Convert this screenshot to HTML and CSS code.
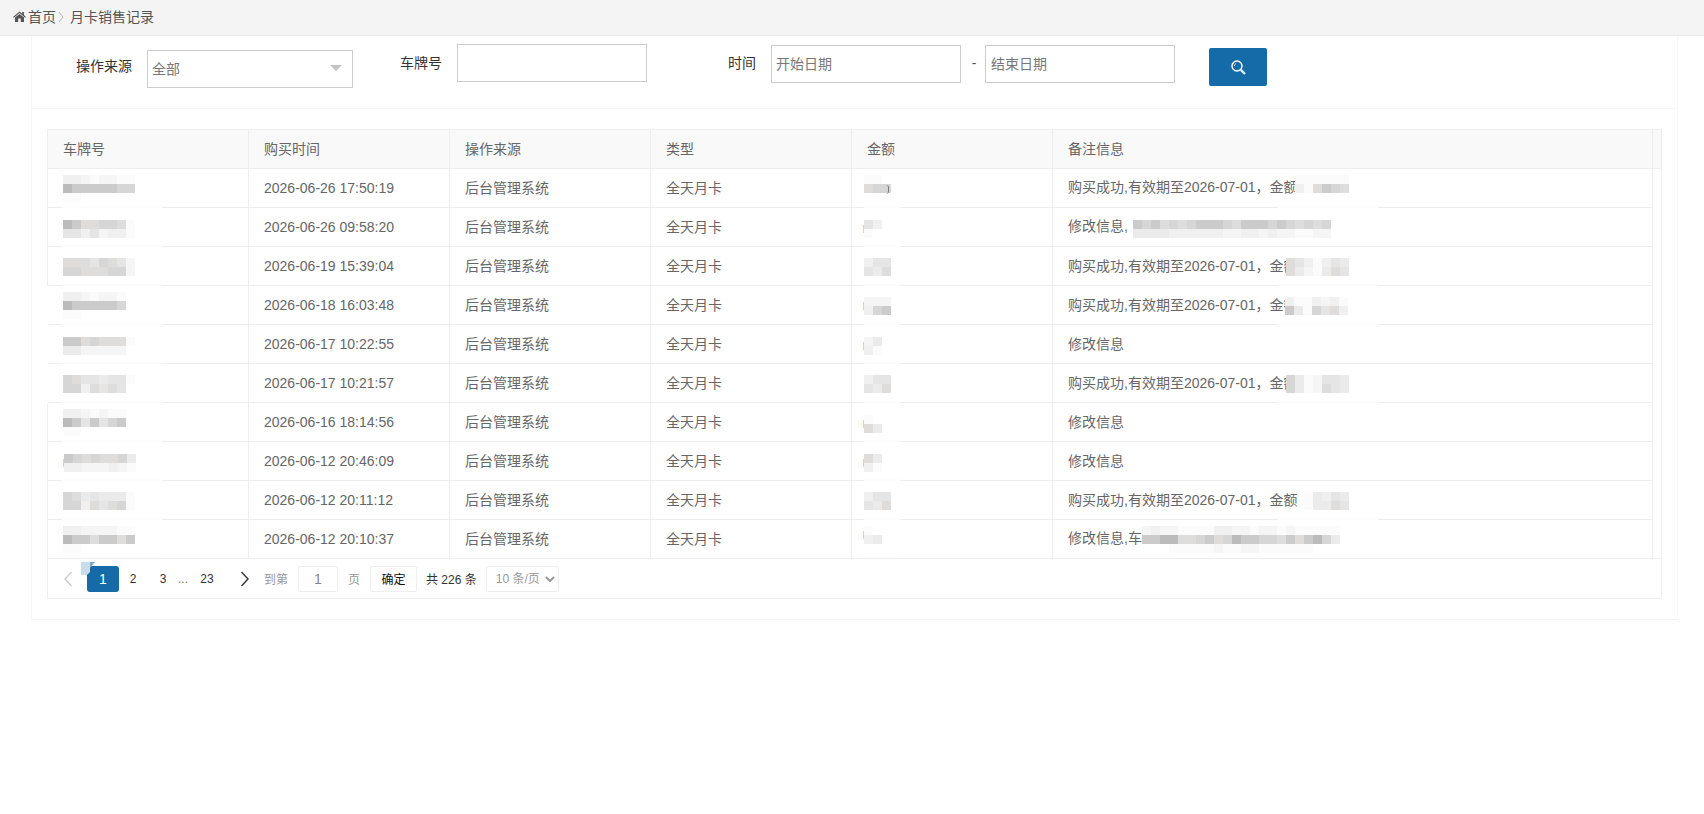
FILE: index.html
```html
<!DOCTYPE html>
<html lang="zh-CN">

<head>
    <meta charset="UTF-8">
    <meta name="viewport" content="width=device-width, initial-scale=1.0">
    <title>月卡销售记录</title>
    <link rel="stylesheet" href="styles.css">
</head>

<body>
    <div class="crumbs">
        <svg class="home-icon" viewBox="0 0 13 11" width="13" height="11">
            <path d="M6.5 0.4 L9.2 2.7 V1 H10.9 V4.1 L13 5.9 L12.2 6.8 L6.5 2 L0.8 6.8 L0 5.9 Z" fill="#555" />
            <path d="M2 6.6 L6.5 2.9 L11 6.6 V11 H7.8 V7.6 H5.2 V11 H2 Z" fill="#555" />
        </svg>
        <a class="crumb-link">首页</a>
        <svg class="crumb-sep" viewBox="0 0 6 12" width="6" height="12">
            <path d="M1 1 L5 6 L1 11" fill="none" stroke="#bbb" stroke-width="1" />
        </svg>
        <span>月卡销售记录</span>
    </div>

    <div class="card">
        <div class="filter">
            <label class="filter-label label-source">操作来源</label>
            <div class="fake-select"><span>全部</span><i class="caret"></i></div>
            <label class="filter-label label-plate">车牌号</label>
            <input type="text" class="field field-plate">
            <label class="filter-label label-time">时间</label>
            <input type="text" class="field field-date" placeholder="开始日期">
            <span class="dash">-</span>
            <input type="text" class="field field-date field-end" placeholder="结束日期">
            <button class="search-btn">
                <svg viewBox="0 0 16 16" width="16" height="16">
                    <circle cx="7" cy="7" r="5" fill="none" stroke="#fff" stroke-width="1.4" />
                    <path d="M4.4 7 A2.7 2.7 0 0 1 6 4.5" fill="none" stroke="#cfe3f2" stroke-width="1" />
                    <path d="M10.6 10.6 L15 15" stroke="#dcebf6" stroke-width="2.4" />
                </svg>
            </button>
        </div>

        <div class="table-box">
            <i class="edge-wipe"></i>
            <table class="sales">
                <thead>
                    <tr>
                        <th>车牌号</th>
                        <th>购买时间</th>
                        <th>操作来源</th>
                        <th>类型</th>
                        <th>金额</th>
                        <th>备注信息</th>
                        <th class="gutter"></th>
                    </tr>
                </thead>
                <tbody>
                    <tr>
                        <td class="blur-name"><span class="mosaic" data-shades="33212211/98888877/11000000"></span></td>
                        <td>2026-06-26 17:50:19</td>
                        <td>后台管理系统</td>
                        <td>全天月卡</td>
                        <td class="blur-amount"><span class="mosaic" data-shift="-3" data-shades="110/677/000"></span><i class="tail"></i></td>
                        <td class="blur-note">购买成功,有效期至2026-07-01，金额<span class="mosaic" data-shift="-3" data-shades="111111/316876/000000"></span></td>
                        <td class="gutter"></td>
                    </tr>
                    <tr>
                        <td class="blur-name"><span class="mosaic drop" data-shades="98667761/55352331"></span></td>
                        <td>2026-06-26 09:58:20</td>
                        <td>后台管理系统</td>
                        <td>全天月卡</td>
                        <td class="blur-amount"><span class="mosaic drop mark" data-shift="-3" data-shades="53/10"></span></td>
                        <td>修改信息,<span class="mosaic drop" data-shift="5" data-shades="8786767888768887876767/4444333333223323221122"></span></td>
                        <td class="gutter"></td>
                    </tr>
                    <tr>
                        <td class="blur-name"><span class="mosaic" data-shades="66657652/77666772"></span></td>
                        <td>2026-06-19 15:39:04</td>
                        <td>后台管理系统</td>
                        <td>全天月卡</td>
                        <td class="blur-amount"><span class="mosaic" data-shift="-3" data-shades="355/546"></span></td>
                        <td class="blur-note">购买成功,有效期至2026-07-01，金额<span class="mosaic" data-shift="-12" data-shades="6531354/6421465"></span></td>
                        <td class="gutter"></td>
                    </tr>
                    <tr>
                        <td class="blur-name"><span class="mosaic" data-shades="33212210/98888870/11000000"></span></td>
                        <td>2026-06-18 16:03:48</td>
                        <td>后台管理系统</td>
                        <td>全天月卡</td>
                        <td class="blur-amount"><span class="mosaic mark" data-shift="-3" data-shades="222/378"></span></td>
                        <td class="blur-note">购买成功,有效期至2026-07-01，金额<span class="mosaic" data-shift="-13" data-shades="3113231/8417563"></span></td>
                        <td class="gutter"></td>
                    </tr>
                    <tr>
                        <td class="blur-name"><span class="mosaic drop" data-shades="88676661/44222220"></span></td>
                        <td>2026-06-17 10:22:55</td>
                        <td>后台管理系统</td>
                        <td>全天月卡</td>
                        <td class="blur-amount"><span class="mosaic drop mark" data-shift="-3" data-shades="24/31"></span></td>
                        <td>修改信息</td>
                        <td class="gutter"></td>
                    </tr>
                    <tr>
                        <td class="blur-name"><span class="mosaic" data-shades="76554551/77365650"></span></td>
                        <td>2026-06-17 10:21:57</td>
                        <td>后台管理系统</td>
                        <td>全天月卡</td>
                        <td class="blur-amount"><span class="mosaic" data-shift="-3" data-shades="355/546"></span></td>
                        <td class="blur-note">购买成功,有效期至2026-07-01，金额<span class="mosaic" data-shift="-12" data-shades="7412554/7412654"></span></td>
                        <td class="gutter"></td>
                    </tr>
                    <tr>
                        <td class="blur-name"><span class="mosaic" data-shades="33212110/98585780/11000000"></span></td>
                        <td>2026-06-16 18:14:56</td>
                        <td>后台管理系统</td>
                        <td>全天月卡</td>
                        <td class="blur-amount"><span class="mosaic drop mark" data-shift="-3" data-shades="10/64"></span></td>
                        <td>修改信息</td>
                        <td class="gutter"></td>
                    </tr>
                    <tr>
                        <td class="blur-name"><span class="mosaic drop mark" data-shift="1" data-shades="87676674/33222321"></span></td>
                        <td>2026-06-12 20:46:09</td>
                        <td>后台管理系统</td>
                        <td>全天月卡</td>
                        <td class="blur-amount"><span class="mosaic drop mark" data-shift="-3" data-shades="64/31"></span></td>
                        <td>修改信息</td>
                        <td class="gutter"></td>
                    </tr>
                    <tr>
                        <td class="blur-name"><span class="mosaic" data-shades="76454441/77365671"></span></td>
                        <td>2026-06-12 20:11:12</td>
                        <td>后台管理系统</td>
                        <td>全天月卡</td>
                        <td class="blur-amount"><span class="mosaic" data-shift="-3" data-shades="355/546"></span></td>
                        <td class="blur-note">购买成功,有效期至2026-07-01，金额<span class="mosaic" data-shift="6" data-shades="14354/14465"></span></td>
                        <td class="gutter"></td>
                    </tr>
                    <tr>
                        <td class="blur-name"><span class="mosaic" data-shades="33222211/98868868/11000000"></span></td>
                        <td>2026-06-12 20:10:37</td>
                        <td>后台管理系统</td>
                        <td>全天月卡</td>
                        <td class="blur-amount"><span class="mosaic mark" data-shift="-3" data-shades="10/34/00"></span></td>
                        <td>修改信息,车<span class="mosaic" data-shades="2322111133221221211111/8899667867988776868974/0001111121122111111000"></span></td>
                        <td class="gutter"></td>
                    </tr>
                </tbody>
            </table>

            <div class="pager">
                <svg class="pager-glitch" viewBox="0 0 14 13" width="14" height="13">
                    <path d="M0 0 H9 V10 L6 13 H0 Z" fill="#c9dcec" />
                    <path d="M9 0 H14 L9 6 Z" fill="#7fa9d0" />
                </svg>
                <svg class="pager-arrow" viewBox="0 0 10 16" width="10" height="16">
                    <path d="M8.5 1 L2 8 L8.5 15" fill="none" stroke="#ccc" stroke-width="1.4" />
                </svg>
                <a class="page page-on">1</a>
                <a class="page page-first">2</a>
                <a class="page">3</a>
                <span class="page-more">...</span>
                <a class="page page-last">23</a>
                <svg class="pager-arrow next" viewBox="0 0 10 16" width="10" height="16">
                    <path d="M1.5 1 L8 8 L1.5 15" fill="none" stroke="#333" stroke-width="1.4" />
                </svg>
                <span class="go-text">到第</span>
                <input type="text" class="page-input" value="1">
                <span class="go-text">页</span>
                <button class="page-ok">确定</button>
                <span class="total">共 226 条</span>
                <select class="page-size">
                    <option>10 条/页</option>
                </select>
            </div>
        </div>
    </div>
    <script src="script.js"></script>
</body>

</html>
```

FILE: styles.css
```css
* {
    box-sizing: border-box;
}

body {
    margin: 0;
    background: #fff;
    color: #666;
    font-family: "Liberation Sans", "Noto Sans CJK SC", sans-serif;
    font-size: 14px;
}

.crumbs {
    display: flex;
    align-items: center;
    height: 36px;
    padding: 0 0 3px 13px;
    background: #f4f4f4;
    border-bottom: 1px solid #e8e8e8;
    color: #555;
}

.home-icon {
    margin-right: 2px;
}

.crumb-sep {
    margin: 2px 6px 0 2px;
}

.card {
    margin-left: 31px;
    width: 1647px;
    padding-bottom: 20px;
    border-left: 1px solid #f6f6f6;
    border-right: 1px solid #f8f8f8;
    border-bottom: 1px solid #f3f3f3;
}

/* filter row */
.filter {
    display: flex;
    align-items: flex-start;
    height: 73px;
    border-bottom: 1px solid #f5f5f5;
    color: #333;
}

.filter-label {
    line-height: 20px;
}

.label-source {
    margin: 20px 15px 0 44px;
}

.label-plate {
    margin: 17px 15px 0 47px;
}

.label-time {
    margin: 17px 15px 0 81px;
}

.fake-select {
    display: flex;
    align-items: center;
    justify-content: space-between;
    width: 206px;
    height: 38px;
    margin-top: 14px;
    padding: 0 10px 2px 4px;
    border: 1px solid #ccc;
    color: #777;
}

.caret {
    border-left: 6px solid transparent;
    border-right: 6px solid transparent;
    border-top: 6px solid #c4c4c4;
}

.field {
    height: 38px;
    padding: 0 4px;
    border: 1px solid #ccc;
    outline: none;
    font: inherit;
    background: #fff;
}

.field::placeholder {
    color: #777;
}

.field-plate {
    width: 190px;
    margin-top: 8px;
}

.field-date {
    width: 190px;
    margin-top: 9px;
}

.field-end {
    padding-left: 5px;
}

.dash {
    width: 24px;
    margin-top: 19px;
    padding-left: 2px;
    text-align: center;
    color: #555;
}

.search-btn {
    display: flex;
    align-items: center;
    justify-content: center;
    width: 58px;
    height: 38px;
    margin: 12px 0 0 34px;
    padding: 0;
    border: none;
    border-radius: 2px;
    background: #156aa8;
}

/* table */
.table-box {
    position: relative;
    width: 1615px;
    margin: 20px 0 0 15px;
    border: 1px solid #eee;
}

.edge-wipe {
    position: absolute;
    left: -1px;
    top: 156px;
    width: 2px;
    height: 118px;
    background: #fcfcfc;
}

.sales {
    width: 100%;
    table-layout: fixed;
    border-collapse: separate;
    border-spacing: 0;
}

.sales th,
.sales td {
    position: relative;
    width: 201px;
    height: 39px;
    padding: 0 0 0 15px;
    border-right: 1px solid #eee;
    border-bottom: 1px solid #eee;
    text-align: left;
    font-weight: normal;
    white-space: nowrap;
    line-height: 20px;
}

.sales th {
    background: #f9f9f9;
}

.sales th:nth-child(6),
.sales td:nth-child(6) {
    width: auto;
}

.sales th.gutter,
.sales td.gutter {
    width: 8px;
    padding: 0;
    border-right: none;
}

.sales td.gutter {
    border-bottom: none;
}

.sales tbody tr:last-child td {
    height: 38px;
    border-bottom: none;
}

/* blurred parts of the screenshot */
.mosaic {
    position: relative;
    z-index: 1;
    display: inline-grid;
    grid-auto-columns: 9px;
    grid-auto-rows: 9px;
    vertical-align: middle;
}

.drop {
    margin-top: 4px;
}

.mark::before {
    content: "";
    position: absolute;
    left: -1px;
    top: 5px;
    width: 1px;
    height: 8px;
    background: #eccfb0;
}

.tail {
    position: relative;
    z-index: 2;
    display: inline-block;
    width: 3px;
    height: 9px;
    margin: 2px 0 0 -5px;
    border-right: 1px solid #777;
    border-radius: 0 3px 3px 0;
    vertical-align: middle;
}

.s0 { background: #fff; }
.s1 { background: #fbfbfb; }
.s2 { background: #f5f5f5; }
.s3 { background: #f0f0f0; }
.s4 { background: #ebebeb; }
.s5 { background: #e5e5e5; }
.s6 { background: #dedddc; }
.s7 { background: #d6d6d7; }
.s8 { background: #cbcbcc; }
.s9 { background: #bcbbbb; }

.blur-name::after,
.blur-amount::after,
.blur-note::after {
    content: "";
    position: absolute;
    bottom: -1px;
    height: 2px;
    background: #fcfcfc;
}

.blur-name::after {
    left: 14px;
    width: 100px;
}

.blur-amount::after {
    left: 12px;
    width: 36px;
}

.blur-note::after {
    left: 225px;
    width: 100px;
}

/* pager */
.pager {
    position: relative;
    display: flex;
    align-items: center;
    height: 40px;
    border-top: 1px solid #eee;
    padding-left: 15px;
    font-size: 12px;
    color: #333;
}

.pager-glitch {
    position: absolute;
    left: 33px;
    top: 3px;
}

.pager-arrow {
    margin-right: 14px;
}

.pager-arrow.next {
    margin: 0 14px 0 17px;
}

.page {
    width: 30px;
    height: 26px;
    line-height: 26px;
    text-align: center;
    border-radius: 3px;
}

.page-on {
    width: 32px;
    background: #156aa8;
    color: #fff;
    font-size: 14px;
}

.page-first {
    margin-left: -1px;
}

.page-more {
    width: 14px;
    margin-left: -2px;
    color: #777;
    text-align: center;
}

.page-last {
    width: 32px;
    margin-left: 1px;
}

.go-text {
    color: #999;
}

.page-input {
    width: 40px;
    height: 26px;
    margin: 0 10px;
    border: 1px solid #eee;
    border-radius: 2px;
    outline: none;
    text-align: center;
    font: inherit;
    font-size: 14px;
    color: #888;
}

.page-ok {
    width: 47px;
    height: 26px;
    margin-left: 10px;
    padding: 0;
    border: 1px solid #eee;
    border-radius: 2px;
    background: #fff;
    font: inherit;
    color: #111;
}

.total {
    margin-left: 9px;
}

.page-size {
    width: 73px;
    height: 26px;
    margin-left: 9px;
    padding-left: 5px;
    border: 1px solid #eee;
    border-radius: 2px;
    outline: none;
    background: #fff;
    font: inherit;
    color: #999;
}
```

FILE: script.js
```js
// draw the blurred blocks from their shade strings
let blocks = document.querySelectorAll('.mosaic')
for (let i = 0; i < blocks.length; i++) {
    let rows = blocks[i].dataset.shades.split('/')
    if (blocks[i].dataset.shift) {
        blocks[i].style.marginLeft = blocks[i].dataset.shift + 'px'
    }
    for (let r = 0; r < rows.length; r++) {
        for (let c = 0; c < rows[r].length; c++) {
            let cell = document.createElement('span')
            cell.className = 's' + rows[r][c]
            cell.style.gridRow = r + 1
            cell.style.gridColumn = c + 1
            blocks[i].appendChild(cell)
        }
    }
}
```
